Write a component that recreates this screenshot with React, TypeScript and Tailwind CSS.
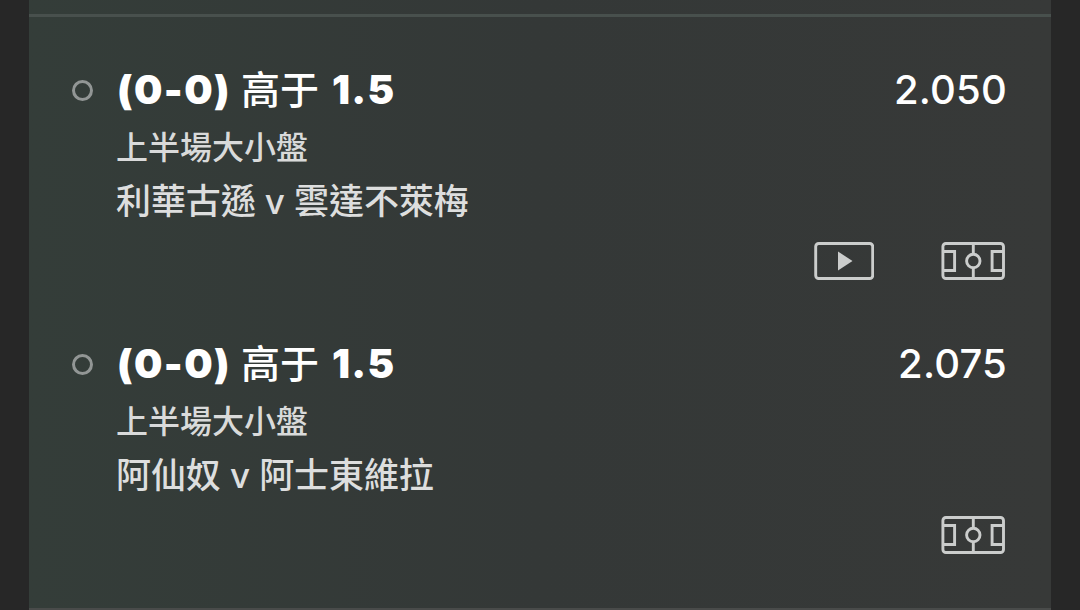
import React from 'react';

interface Selection {
  id: number;
  score: string;
  pick: string;
  line: string;
  odds: string;
  market: string;
  home: string;
  away: string;
  hasStream: boolean;
}

const selections: Selection[] = [
  {
    id: 1,
    score: '0-0',
    pick: '高于',
    line: '1.5',
    odds: '2.050',
    market: '上半場大小盤',
    home: '利華古遜',
    away: '雲達不萊梅',
    hasStream: true,
  },
  {
    id: 2,
    score: '0-0',
    pick: '高于',
    line: '1.5',
    odds: '2.075',
    market: '上半場大小盤',
    home: '阿仙奴',
    away: '阿士東維拉',
    hasStream: false,
  },
];

const StreamIcon = () => (
  <svg width="60" height="38" viewBox="0 0 60 38" fill="none" stroke="#cbcdcc" strokeWidth="2.9">
    <rect x="1.7" y="1.5" width="57" height="35" rx="3" />
    <path d="M24 9.5v19L38.5 19z" fill="#cbcdcc" stroke="none" />
  </svg>
);

const PitchIcon = () => (
  <svg width="64" height="38" viewBox="0 0 64 38" fill="none" stroke="#cbcdcc" strokeWidth="2.9">
    <rect x="1.9" y="1.5" width="60.6" height="35" rx="3" />
    <path d="M32.3 1.5v10.7M32.3 25.8v10.7" />
    <circle cx="32.3" cy="19" r="6.7" />
    <path d="M2 9.5h11.6v19H2M62 9.5H51.1v19H62" />
  </svg>
);

const SelectionRow: React.FC<{ item: Selection }> = ({ item }) => {
  const [homeGoals, awayGoals] = item.score.split('-');

  return (
    <div className="h-[274px] pl-[43px] pr-[46px] flex">
      {/* Status marker */}
      <div className="w-[44px] shrink-0 pt-[20px]">
        <div className="w-[21px] h-[21px] rounded-full border-3 border-[#929695]"></div>
      </div>

      <div className="flex-1 whitespace-nowrap">
        <div className="flex justify-between h-[61px] leading-[60px] text-[40px] text-white -mr-px">
          <div className="flex">
            <span className="font-black tracking-[1.4px] pl-px w-[125px] flex">
              <span className="pt-px">(</span>
              <span>{homeGoals}</span>
              <span className="pt-px">-</span>
              <span>{awayGoals}</span>
              <span className="pt-px">)</span>
            </span>
            <span className="font-medium text-[39px] w-[91px]">{item.pick}</span>
            <span className="font-black tracking-[1.2px]">{item.line}</span>
          </div>
          <span className="font-medium tracking-[0.2px] -mr-px">{item.odds}</span>
        </div>
        <p className="h-[54px] leading-[54px] text-[32px] font-medium text-[#d9dada]">{item.market}</p>
        <p className="h-[53px] leading-[53px] text-[35px] font-medium text-[#dddede] tracking-[-0.1px]">
          {item.home} v {item.away}
        </p>
        <div className="flex justify-end gap-[67px] pt-[14px]">
          {item.hasStream && <StreamIcon />}
          <PitchIcon />
        </div>
      </div>
    </div>
  );
};

const App: React.FC = () => {
  return (
    <div className="h-[610px] overflow-hidden bg-[#272727] pl-[29px] pr-[29px] font-['Inter','Noto_Sans_CJK_TC',sans-serif]">
      <div className="h-[610px] flex flex-col bg-linear-to-r from-[#343d39] via-[#343837] to-[#373938]">
        <div className="h-[17px] shrink-0 border-b-[3px] border-[#48504d]"></div>
        <div className="flex-1 pt-[43px] overflow-hidden">
          {selections.map(item => (
            <SelectionRow key={item.id} item={item} />
          ))}
        </div>
        <div className="h-[2px] shrink-0 bg-[#494b4a]"></div>
      </div>
    </div>
  );
};

export default App;
